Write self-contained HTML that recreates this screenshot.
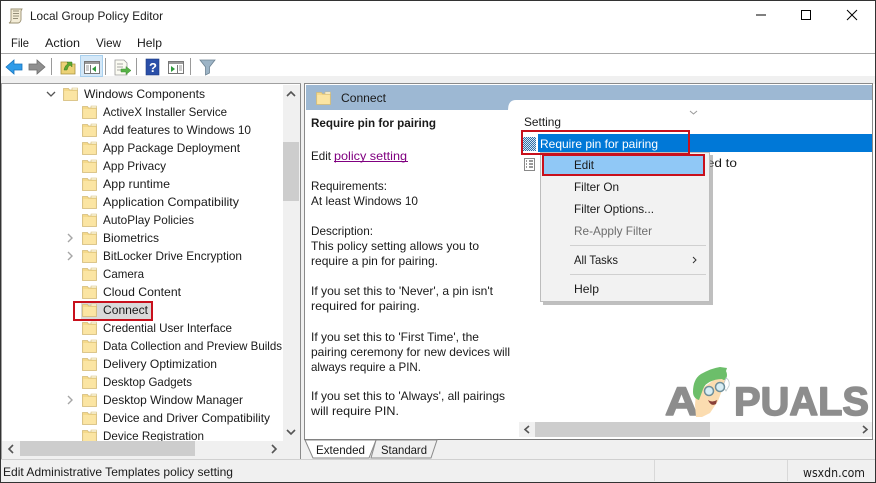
<!DOCTYPE html>
<html lang="en"><head><meta charset="utf-8"><title>Local Group Policy Editor</title>
<style>
html,body{margin:0;padding:0;background:#fff;width:876px;height:483px;overflow:hidden}
svg{display:block}
text{font-family:"Liberation Sans",sans-serif;font-size:12px;fill:#1a1a1a}
</style></head><body>
<svg width="876" height="483" viewBox="0 0 876 483" xmlns="http://www.w3.org/2000/svg">
<defs>
<symbol id="f" viewBox="0 0 15 14" overflow="visible">
<path d="M.5 3V1.500h5l1 1.500h8v10.500H.5z" fill="#f5d98a" stroke="#d2bb7a" stroke-width=".8"/>
<path d="M9 1h5.500v2H9z" fill="#fdf6dc" stroke="#d2bb7a" stroke-width=".6"/>
<path d="M1.200 4h12.600v9H1.200z" fill="#fbe5a3"/>
</symbol>
<pattern id="chk" width="2" height="2" patternUnits="userSpaceOnUse">
<rect width="2" height="2" fill="#2f6fa8"/><rect width="1" height="1" fill="#d5e6f2"/><rect x="1" y="1" width="1" height="1" fill="#d5e6f2"/>
</pattern>
<clipPath id="tc"><rect x="2" y="84" width="281" height="357"/></clipPath>
</defs>
<rect width="876" height="483" fill="#fff"/>
<!-- title -->
<path d="M11 9h11l-1 2v9q-1 3-3 3H9q2-1 2-3z" fill="#f3ecd6" stroke="#9a9072" stroke-width=".9"/>
<path d="M13 11h6M13 13.500h6M13 16h6M13 18.500h5" stroke="#77705c" stroke-width=".8"/>
<text x="30" y="20" textLength="133" lengthAdjust="spacingAndGlyphs">Local Group Policy Editor</text>
<path d="M756 15h10" stroke="#000" stroke-width="1"/>
<rect x="801.500" y="10.500" width="9" height="9" fill="none" stroke="#000"/>
<path d="M847 10l10 10M857 10l-10 10" stroke="#000" stroke-width="1"/>
<!-- menu -->
<text x="11" y="47" textLength="18" lengthAdjust="spacingAndGlyphs">File</text>
<text x="45" y="47" textLength="35" lengthAdjust="spacingAndGlyphs">Action</text>
<text x="96" y="47" textLength="25" lengthAdjust="spacingAndGlyphs">View</text>
<text x="137" y="47" textLength="25" lengthAdjust="spacingAndGlyphs">Help</text>
<rect x="0" y="53" width="876" height="1" fill="#a8a8a8"/>
<!-- toolbar -->
<rect x="0" y="76" width="876" height="8" fill="#f0f0f0"/>
<path d="M6 67l8-7v4h8v6h-8v4z" fill="#2f9be8" stroke="#1673bd" stroke-width=".8"/>
<path d="M45 67l-8-7v4h-8v6h8v4z" fill="#8f8f8f" stroke="#6e6e6e" stroke-width=".8"/>
<path d="M51.500 58v17M105.500 58v17M136.500 58v17M190.500 58v17" stroke="#9a9a9a"/>
<path d="M61 62h6l1 2h7v10H61z" fill="#ecd277" stroke="#a8923f" stroke-width=".8"/>
<path d="M64 70q1-5 4-6l-1-2 5 0 0 5-2-2q-2 1-3 5z" fill="#5aa62f" stroke="#3c7c1e" stroke-width=".5"/>
<rect x="80.500" y="55.500" width="22" height="21" fill="#d4e8f8" stroke="#a8d0ee"/>
<rect x="84.500" y="61.500" width="15" height="12" fill="#fff" stroke="#777"/>
<rect x="85" y="62" width="14" height="2" fill="#9a9a9a"/>
<path d="M90.500 65v8" stroke="#777"/><path d="M86 66h3M86 68h3M86 70h3" stroke="#999"/>
<path d="M96 66v6l-4-3z" fill="#2d9a3a"/>
<path d="M115 60h9l3 3v12h-12z" fill="#fbfbf2" stroke="#999" stroke-width=".8"/>
<path d="M117 64h6M117 67h6M117 70h4" stroke="#888" stroke-width=".8"/>
<path d="M121 69h5v-2.500l5 4-5 4V72h-5z" fill="#57b247" stroke="#3f8f32" stroke-width=".5"/>
<rect x="146" y="59" width="13" height="16" fill="#2a4fa8" stroke="#1d3a82" stroke-width=".6"/>
<text x="149" y="72" style="font-size:13px;font-weight:bold;fill:#fff">?</text>
<rect x="168.500" y="61.500" width="15" height="12" fill="#fff" stroke="#777"/>
<rect x="169" y="62" width="14" height="2" fill="#9a9a9a"/>
<path d="M177.500 65v8" stroke="#777"/><path d="M179 66h3M179 68h3M179 70h3" stroke="#999"/>
<path d="M171 66v6l4-3z" fill="#2d9a3a"/>
<path d="M200 60h15l-5.500 7v6l-4 2v-8z" fill="#9db4c6" stroke="#6d8292" stroke-width=".8"/>
<!-- tree pane -->
<rect x="1" y="83" width="1" height="376" fill="#a0a0a0"/>
<rect x="2" y="84" width="298" height="375" fill="#fff"/>
<rect x="300" y="83" width="1" height="376" fill="#8a8a8a"/>
<rect x="1" y="83" width="300" height="1" fill="#a0a0a0"/>
<rect x="283" y="85" width="17" height="356" fill="#f0f0f0"/>
<rect x="283" y="142" width="16" height="59" fill="#cdcdcd"/>
<path d="M287 96l4-4 4 4" fill="none" stroke="#555" stroke-width="1.600"/>
<path d="M287 430l4 4 4-4" fill="none" stroke="#555" stroke-width="1.600"/>
<g clip-path="url(#tc)">
<path d="M47 92l4 4 4-4" fill="none" stroke="#555" stroke-width="1.300"/>
<use href="#f" x="63" y="87" width="15" height="14"/>
<text x="84" y="98" textLength="121" lengthAdjust="spacingAndGlyphs">Windows Components</text>
<rect x="81" y="301" width="70" height="18" fill="#d9d9d9"/>
<use href="#f" x="82" y="105" width="15" height="14"/><text x="103" y="116" textLength="124" lengthAdjust="spacingAndGlyphs">ActiveX Installer Service</text>
<use href="#f" x="82" y="123" width="15" height="14"/><text x="103" y="134" textLength="148" lengthAdjust="spacingAndGlyphs">Add features to Windows 10</text>
<use href="#f" x="82" y="141" width="15" height="14"/><text x="103" y="152" textLength="137" lengthAdjust="spacingAndGlyphs">App Package Deployment</text>
<use href="#f" x="82" y="159" width="15" height="14"/><text x="103" y="170" textLength="63" lengthAdjust="spacingAndGlyphs">App Privacy</text>
<use href="#f" x="82" y="177" width="15" height="14"/><text x="103" y="188" textLength="67" lengthAdjust="spacingAndGlyphs">App runtime</text>
<use href="#f" x="82" y="195" width="15" height="14"/><text x="103" y="206" textLength="136" lengthAdjust="spacingAndGlyphs">Application Compatibility</text>
<use href="#f" x="82" y="213" width="15" height="14"/><text x="103" y="224" textLength="91" lengthAdjust="spacingAndGlyphs">AutoPlay Policies</text>
<use href="#f" x="82" y="231" width="15" height="14"/><text x="103" y="242" textLength="56" lengthAdjust="spacingAndGlyphs">Biometrics</text>
<use href="#f" x="82" y="249" width="15" height="14"/><text x="103" y="260" textLength="139" lengthAdjust="spacingAndGlyphs">BitLocker Drive Encryption</text>
<use href="#f" x="82" y="267" width="15" height="14"/><text x="103" y="278" textLength="41" lengthAdjust="spacingAndGlyphs">Camera</text>
<use href="#f" x="82" y="285" width="15" height="14"/><text x="103" y="296" textLength="78" lengthAdjust="spacingAndGlyphs">Cloud Content</text>
<use href="#f" x="82" y="303" width="15" height="14"/><text x="103" y="314" textLength="45" lengthAdjust="spacingAndGlyphs">Connect</text>
<use href="#f" x="82" y="321" width="15" height="14"/><text x="103" y="332" textLength="129" lengthAdjust="spacingAndGlyphs">Credential User Interface</text>
<use href="#f" x="82" y="339" width="15" height="14"/><text x="103" y="350" textLength="179" lengthAdjust="spacingAndGlyphs">Data Collection and Preview Builds</text>
<use href="#f" x="82" y="357" width="15" height="14"/><text x="103" y="368" textLength="114" lengthAdjust="spacingAndGlyphs">Delivery Optimization</text>
<use href="#f" x="82" y="375" width="15" height="14"/><text x="103" y="386" textLength="89" lengthAdjust="spacingAndGlyphs">Desktop Gadgets</text>
<use href="#f" x="82" y="393" width="15" height="14"/><text x="103" y="404" textLength="140" lengthAdjust="spacingAndGlyphs">Desktop Window Manager</text>
<use href="#f" x="82" y="411" width="15" height="14"/><text x="103" y="422" textLength="167" lengthAdjust="spacingAndGlyphs">Device and Driver Compatibility</text>
<use href="#f" x="82" y="429" width="15" height="14"/><text x="103" y="440" textLength="101" lengthAdjust="spacingAndGlyphs">Device Registration</text>
</g>
<path d="M68 234l4 4-4 4M68 252l4 4-4 4M68 396l4 4-4 4" fill="none" stroke="#a6a6a6" stroke-width="1.400"/>
<rect x="74" y="302" width="78" height="18" fill="none" stroke="#c8101c" stroke-width="2"/>
<rect x="2" y="441" width="298" height="18" fill="#f0f0f0"/>
<rect x="20" y="441" width="175" height="15" fill="#cdcdcd"/>
<path d="M13 445l-4 4 4 4" fill="none" stroke="#555" stroke-width="1.600"/>
<path d="M272 445l4 4-4 4" fill="none" stroke="#555" stroke-width="1.600"/>
<!-- right pane -->
<rect x="301" y="84" width="4" height="375" fill="#f0f0f0"/>
<rect x="305" y="84" width="567" height="355" fill="#fff"/>
<rect x="304.500" y="83.500" width="568" height="356" fill="none" stroke="#8a8a8a"/>
<rect x="306" y="85" width="566" height="25" fill="#9db8d3"/>
<path d="M872 100H516q-8 0-8 10v2h364z" fill="#fff"/>
<use href="#f" x="316" y="91" width="15" height="14"/>
<text x="341" y="102" textLength="45" lengthAdjust="spacingAndGlyphs">Connect</text>
<text x="311" y="127" textLength="125" lengthAdjust="spacingAndGlyphs" style="font-weight:bold">Require pin for pairing</text>
<text x="311" y="160" textLength="20" lengthAdjust="spacingAndGlyphs">Edit</text>
<text x="334" y="160" textLength="73" lengthAdjust="spacingAndGlyphs" style="fill:#800080">policy setting</text>
<rect x="334" y="161" width="74" height="1" fill="#800080"/>
<text x="311" y="190" textLength="76" lengthAdjust="spacingAndGlyphs">Requirements:</text>
<text x="311" y="205" textLength="107" lengthAdjust="spacingAndGlyphs">At least Windows 10</text>
<text x="311" y="235" textLength="62" lengthAdjust="spacingAndGlyphs">Description:</text>
<text x="311" y="250" textLength="168" lengthAdjust="spacingAndGlyphs">This policy setting allows you to</text>
<text x="311" y="265" textLength="127" lengthAdjust="spacingAndGlyphs">require a pin for pairing.</text>
<text x="311" y="295" textLength="182" lengthAdjust="spacingAndGlyphs">If you set this to 'Never', a pin isn't</text>
<text x="311" y="310" textLength="109" lengthAdjust="spacingAndGlyphs">required for pairing.</text>
<text x="311" y="341" textLength="168" lengthAdjust="spacingAndGlyphs">If you set this to 'First Time', the</text>
<text x="311" y="356" textLength="199" lengthAdjust="spacingAndGlyphs">pairing ceremony for new devices will</text>
<text x="311" y="371" textLength="110" lengthAdjust="spacingAndGlyphs">always require a PIN.</text>
<text x="311" y="400" textLength="194" lengthAdjust="spacingAndGlyphs">If you set this to 'Always', all pairings</text>
<text x="311" y="415" textLength="88" lengthAdjust="spacingAndGlyphs">will require PIN.</text>
<!-- list -->
<text x="524" y="126" textLength="37" lengthAdjust="spacingAndGlyphs">Setting</text>
<path d="M690 111l3.500 3 3.500-3" fill="none" stroke="#999"/>
<rect x="538" y="134" width="334" height="18" fill="#0078d7"/>
<rect x="523" y="137" width="13" height="14" fill="url(#chk)"/>
<text x="540" y="148" textLength="118" lengthAdjust="spacingAndGlyphs" style="fill:#fff">Require pin for pairing</text>
<rect x="524.500" y="158.500" width="10" height="12" fill="#fff" stroke="#888"/>
<path d="M526 161h1M526 164h1M526 167h1M529 161h4M529 164h4M529 167h4" stroke="#333"/>
<text x="703" y="167" textLength="34" lengthAdjust="spacingAndGlyphs">ted to</text>
<!-- context menu -->
<rect x="543" y="155" width="170" height="150" fill="#8a8a8a" opacity=".55"/>
<rect x="540" y="152" width="170" height="150" fill="#f2f2f2"/>
<rect x="540.500" y="152.500" width="169" height="149" fill="none" stroke="#bdbdbd"/>
<rect x="543" y="155" width="161" height="20" fill="#90c8f6"/>
<rect x="543" y="155" width="161" height="20" fill="none" stroke="#c8101c" stroke-width="2"/>
<text x="574" y="169" textLength="20" lengthAdjust="spacingAndGlyphs">Edit</text>
<text x="574" y="191" textLength="45" lengthAdjust="spacingAndGlyphs">Filter On</text>
<text x="574" y="213" textLength="80" lengthAdjust="spacingAndGlyphs">Filter Options...</text>
<text x="574" y="235" textLength="78" lengthAdjust="spacingAndGlyphs" style="fill:#6d6d6d">Re-Apply Filter</text>
<rect x="570" y="245" width="136" height="1" fill="#d0d0d0"/>
<text x="574" y="264" textLength="44" lengthAdjust="spacingAndGlyphs">All Tasks</text>
<path d="M693 257l3 3-3 3" fill="none" stroke="#333"/>
<rect x="570" y="274" width="136" height="1" fill="#d0d0d0"/>
<text x="574" y="293" textLength="25" lengthAdjust="spacingAndGlyphs">Help</text>
<!-- red box 1 -->
<rect x="522" y="131" width="167" height="23" fill="none" stroke="#c8101c" stroke-width="2"/>
<!-- list hscroll -->
<rect x="519" y="422" width="353" height="15" fill="#f0f0f0"/>
<rect x="535" y="422" width="175" height="15" fill="#cdcdcd"/>
<path d="M529 426l-4 3.500 4 3.500" fill="none" stroke="#555" stroke-width="1.600"/>
<path d="M863 426l4 3.500-4 3.500" fill="none" stroke="#555" stroke-width="1.600"/>
<!-- logo -->
<g style="stroke:#8d8d8d;stroke-width:1.500;stroke-linejoin:round">
<text x="665" y="415" textLength="33" lengthAdjust="spacingAndGlyphs" style="font-size:40px;font-weight:bold;fill:#8d8d8d">A</text>
<text x="734" y="415" textLength="135" lengthAdjust="spacingAndGlyphs" style="font-size:40px;font-weight:bold;fill:#8d8d8d">PUALS</text>
</g>
<path d="M696 393l30-22-2 14-6 16-8 12-8 4-6 0-1-12z" fill="#fbdcb0"/>
<path d="M693 392q0-13 8-18 11-6 19-7l7 1-1 3q2 4 0 8-2 2-4 0-8 0-14 4-4 2-6 9l-3 8q-6-2-6-8z" fill="#6cbe6a"/>
<path d="M726 378q4 2 3 8l-3 5-3-5z" fill="#fff" stroke="#bcc9cc" stroke-width=".8"/>
<circle cx="709" cy="391" r="4.500" fill="#d8eef5" stroke="#6f8f9a" stroke-width="1.500"/>
<circle cx="720" cy="387" r="4.500" fill="#d8eef5" stroke="#6f8f9a" stroke-width="1.500"/>
<path d="M708 400q4 3 9 0l-1 4q-5 3-8-4z" fill="#8a4038"/>
<!-- divider + tabs -->
<rect x="301" y="439" width="575" height="20" fill="#f0f0f0"/>
<rect x="304" y="439" width="569" height="1" fill="#7a7a7a"/>
<path d="M376 440h61l-6 18h-60z" fill="#f0f0f0" stroke="#8a8a8a"/>
<path d="M305 440l8 18h56l7-18z" fill="#fff" stroke="#8a8a8a"/>
<text x="316" y="454" textLength="49" lengthAdjust="spacingAndGlyphs">Extended</text>
<text x="381" y="454" textLength="46" lengthAdjust="spacingAndGlyphs">Standard</text>
<!-- status -->
<rect x="0" y="459" width="876" height="23" fill="#f0f0f0"/>
<rect x="0" y="459" width="876" height="1" fill="#d0d0d0"/>
<rect x="654" y="460" width="1" height="21" fill="#d8d8d8"/>
<rect x="787" y="460" width="1" height="21" fill="#d8d8d8"/>
<text x="3" y="476" textLength="230" lengthAdjust="spacingAndGlyphs">Edit Administrative Templates policy setting</text>
<text x="803" y="477" textLength="62" lengthAdjust="spacingAndGlyphs" style="font-family:'DejaVu Sans',sans-serif">wsxdn.com</text>
<!-- window border -->
<rect x=".5" y=".5" width="875" height="482" fill="none" stroke="#333"/>
</svg>
</body></html>
